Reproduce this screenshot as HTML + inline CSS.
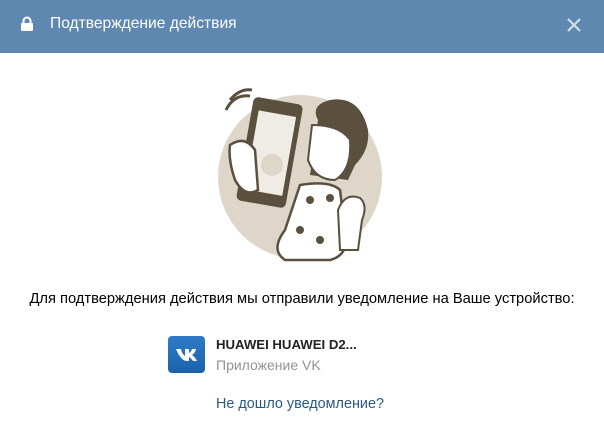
<!DOCTYPE html>
<html><head><meta charset="utf-8"><style>
body{margin:0;width:604px;height:445px;background:#fff;font-family:"Liberation Sans",Arial,sans-serif;overflow:hidden;position:relative}
.hd{position:absolute;left:0;top:0;width:604px;height:53px;background:#5f88b0;color:#fff}
.hd .t{position:absolute;left:50px;top:15px;font-size:15.6px}
.txt{position:absolute;top:291px;left:0;width:604px;text-align:center;font-size:14.7px;color:#000}
.vk{position:absolute;left:168px;top:336px;width:37px;height:37px;border-radius:4px;background:linear-gradient(#2f7bc8,#1b62aa)}
.nm{position:absolute;left:216px;top:337px;font-size:13.2px;font-weight:bold;color:#222}
.sub{position:absolute;left:216px;top:357px;font-size:14px;color:#939393}
.lk{position:absolute;left:216px;top:396px;font-size:14.4px;color:#2a5885}
</style></head><body>
<div class="hd">
<svg style="position:absolute;left:20px;top:16px" width="14" height="16" viewBox="0 0 14 16"><path d="M3.5 7V5a3.5 3.5 0 0 1 7 0v2" fill="none" stroke="#fff" stroke-width="2"/><rect x="1" y="7" width="12" height="8" rx="1" fill="#fff"/></svg>
<div class="t">Подтверждение действия</div>
<svg style="position:absolute;left:567px;top:18px" width="14" height="14" viewBox="0 0 14 14"><path d="M1 1L13 13M13 1L1 13" stroke="#d6e0ea" stroke-width="2"/></svg>
</div>
<svg style="position:absolute;left:200px;top:80px" width="200" height="190" viewBox="0 0 200 190">
<circle cx="100" cy="97" r="82" fill="#ddd6c9"/>
<path d="M30 20 Q40 8 52 10" fill="none" stroke="#5b4f3e" stroke-width="3"/>
<path d="M26 30 Q34 14 50 16" fill="none" stroke="#5b4f3e" stroke-width="3"/>
<path d="M118 40 Q110 25 130 20 Q160 15 168 50 Q170 70 155 85 L148 100 L110 95 Z" fill="#5b4f3e"/>
<path d="M112 45 Q140 45 150 60 Q152 90 135 100 Q115 100 108 80 Z" fill="#fff" stroke="#5b4f3e" stroke-width="2"/>
<path d="M100 105 Q130 100 140 110 L145 150 Q150 175 130 180 L85 180 Q70 170 85 150 Z" fill="#fff" stroke="#5b4f3e" stroke-width="2.5"/>
<circle cx="110" cy="120" r="4" fill="#5b4f3e"/><circle cx="130" cy="118" r="4" fill="#5b4f3e"/><circle cx="100" cy="150" r="4" fill="#5b4f3e"/><circle cx="120" cy="160" r="4" fill="#5b4f3e"/>
<path d="M138 130 Q145 112 160 118 Q168 125 162 140 L158 170 L140 170 Z" fill="#fff" stroke="#5b4f3e" stroke-width="2"/>
<rect x="45" y="20" width="50" height="105" rx="5" fill="#5b4f3e" transform="rotate(10 70 70)"/>
<rect x="52" y="33" width="38" height="80" fill="#efece6" transform="rotate(10 70 70)"/>
<circle cx="72" cy="85" r="11" fill="#ddd6c9"/>
<path d="M30 65 Q45 55 55 70 L58 110 Q45 118 35 100 Q28 80 30 65Z" fill="#fff" stroke="#5b4f3e" stroke-width="2.5"/>
</svg>
<div class="txt">Для подтверждения действия мы отправили уведомление на Ваше устройство:</div>
<div class="vk"><svg width="37" height="37" viewBox="0 0 37 37"><path d="M8 13h5q1 5 4 7v-7h4v4q2-1 3-4h4q-1 4-4 6q3 2 5 6h-4q-2-3-4-4v4h-2q-6 0-11-12z" fill="#fff"/></svg></div>
<div class="nm">HUAWEI HUAWEI D2...</div>
<div class="sub">Приложение VK</div>
<div class="lk">Не дошло уведомление?</div>
</body></html>
